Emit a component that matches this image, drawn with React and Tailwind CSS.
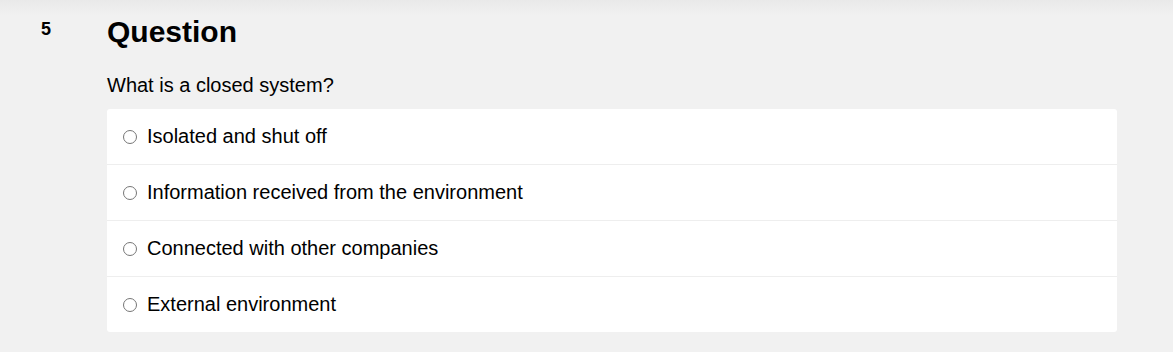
import React from 'react';

const options = [
  'Isolated and shut off',
  'Information received from the environment',
  'Connected with other companies',
  'External environment',
];

const App = () => {
  return (
    <div
      className="min-h-screen bg-[#f1f1f1] bg-gradient-to-b from-[#e9e9e9] to-[#f1f1f1] bg-no-repeat bg-[length:100%_16px] text-black"
      style={{ fontFamily: '"Liberation Sans", Arial, sans-serif' }}
    >
      <div className="flex pt-[15px] pr-[56px]">
        {/* Question number */}
        <div className="w-[107px] shrink-0 pl-[41px] pt-[4px]">
          <span className="block text-[18px] font-bold leading-[20px]">5</span>
        </div>

        {/* Question body */}
        <div className="flex-1">
          <h2 className="text-[30px] font-bold leading-[34px]">Question</h2>
          <p className="mt-[25px] text-[20px] leading-[23px]">What is a closed system?</p>

          <div className="mt-[12px] bg-white rounded-[3px] overflow-hidden">
            {options.map((opt, i) => (
              <label
                key={opt}
                className={`flex items-center pl-[16px] text-[20px] cursor-pointer ${
                  i > 0 ? 'h-[56px] border-t border-[#eeeeee]' : 'h-[55px]'
                }`}
              >
                <span className="w-[14px] h-[14px] rounded-full border border-[#767676] bg-white shrink-0" />
                <span className="ml-[10px] leading-[23px]">{opt}</span>
              </label>
            ))}
          </div>
        </div>
      </div>
    </div>
  );
};

export default App;
